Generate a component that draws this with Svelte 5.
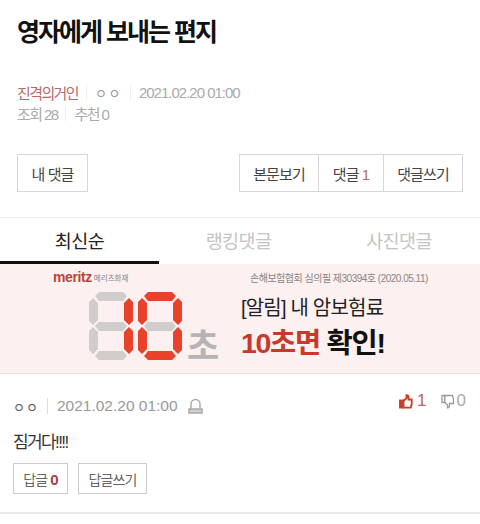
<script>
	const tabs = ['최신순', '랭킹댓글', '사진댓글'];

	// seven segment pieces, on a 44x68 box
	const segs = {
		top: '6,4 10,0 34,0 38,4 34,9 10,9',
		mid: '6,34 10,30 34,30 38,34 34,39 10,39',
		bottom: '6,64 10,59 34,59 38,64 34,68 10,68',
		leftUp: '0,10 4,6 9,11 9,28 4,33 0,29',
		leftDown: '0,39 4,35 9,40 9,57 4,62 0,58',
		rightUp: '44,10 40,6 35,11 35,28 40,33 44,29',
		rightDown: '44,39 40,35 35,40 35,57 40,62 44,58'
	};
	const digits = [
		['rightUp', 'rightDown'],
		['top', 'bottom', 'leftUp', 'leftDown', 'rightUp', 'rightDown']
	];
</script>

<div class="page">
	<h1 class="title">영자에게 보내는 편지</h1>

	<div class="meta">
		<div class="meta__row">
			<span class="meta__board">진격의거인</span>
			<span class="sep"></span>
			<span class="meta__nick">ㅇㅇ</span>
			<span class="sep"></span>
			<span class="meta__date">2021.02.20 01:00</span>
		</div>
		<div class="meta__row">
			<span>조회 28</span>
			<span class="sep"></span>
			<span>추천 0</span>
		</div>
	</div>

	<div class="actions">
		<button class="btn btn--mine">내 댓글</button>
		<div class="group">
			<button class="btn group__view">본문보기</button>
			<button class="btn group__count">댓글 <em>1</em></button>
			<button class="btn group__write">댓글쓰기</button>
		</div>
	</div>

	<div class="tabs">
		{#each tabs as tab, i}
			<div class="tab" class:tab--on={i === 0}>{tab}</div>
		{/each}
	</div>

	<div class="banner">
		<div class="banner__left">
			<div class="logo"><b>meritz</b> <span>메리츠화재</span></div>
			<div class="clock">
				{#each digits as lit}
					<svg width="44" height="68" viewBox="0 0 44 68">
						{#each Object.entries(segs) as [name, pts]}
							<polygon points={pts} fill={lit.includes(name) ? '#e8432a' : '#d2cdcd'} />
						{/each}
					</svg>
				{/each}
				<span class="clock__unit">초</span>
			</div>
		</div>
		<div class="banner__right">
			<div class="banner__review">손해보험협회 심의필 제30394호 (2020.05.11)</div>
			<div class="banner__head">[알림] 내 암보험료</div>
			<div class="banner__big"><em>10초면</em> 확인!</div>
		</div>
	</div>

	<div class="comment">
		<div class="comment__top">
			<div class="comment__info">
				<span class="comment__nick">ㅇㅇ</span>
				<span class="sep sep--tall"></span>
				<span class="comment__date">2021.02.20 01:00</span>
				<svg class="bell" width="15" height="16" viewBox="0 0 15 16" fill="none" stroke="#aaa" stroke-width="1.5">
					<path d="M3 11V6a4.500 4.500 0 0 1 9 0V11" />
					<rect x="1" y="11" width="13" height="4" fill="#d0d0d0" />
				</svg>
			</div>
			<div class="votes">
				<svg width="14" height="15" viewBox="0 0 14 15" fill="none" stroke="#c8402e" stroke-width="1.9">
					<rect x="1" y="6.500" width="3" height="7" fill="#c8402e" />
					<path d="M4.500 7 7.500 4V1.200c1.400 0 2 1 2 2.200V5.500h3.200V10l-1 3.600H4.500z" />
				</svg>
				<span class="votes__up">1</span>
				<svg class="votes__down" width="14" height="15" viewBox="0 0 14 15" fill="none" stroke="#9a9a9a" stroke-width="1.3">
					<rect x="1" y="1.500" width="2.600" height="7" />
					<path d="M3.600 8 6.500 11v2.800c1.400 0 2-1 2-2.200V9.500h4V5l-1-3.500H3.600z" />
				</svg>
				<span class="votes__no">0</span>
			</div>
		</div>
		<p class="comment__body">짐거다!!!!</p>
		<div class="comment__btns">
			<button class="btn btn--small reply">답글 <em>0</em></button>
			<button class="btn btn--small reply-write">답글쓰기</button>
		</div>
	</div>
</div>

<style>
	:global(body) {
		background: #fff;
	}
	.page {
		width: 480px;
		height: 524px;
		overflow: hidden;
		font-family: 'Liberation Sans', 'Noto Sans CJK KR', sans-serif;
	}
	.title {
		margin: 0;
		padding: 14px 17px 0;
		font-size: 25px;
		line-height: 36px;
		font-weight: 700;
		letter-spacing: -2px;
		color: #111;
	}
	.meta {
		margin: 32px 17px 0;
		font-size: 15px;
		letter-spacing: -1.6px;
		color: #aaa;
	}
	.meta__row {
		display: flex;
		align-items: center;
		height: 21px;
	}
	.meta__board {
		color: #b8686c;
	}
	.meta__nick {
		font-size: 13px;
		letter-spacing: 1.500px;
		color: #999;
	}
	.meta__date {
		letter-spacing: -1px;
	}
	.sep {
		width: 1px;
		height: 15px;
		margin: 0 8px;
		background: #eee;
	}
	.sep--tall {
		height: 16px;
		margin: 0 9px 0 8px;
		background: #ddd;
	}
	.actions {
		display: flex;
		justify-content: space-between;
		margin: 30px 17px 0;
	}
	.btn {
		height: 38px;
		padding: 0;
		border: 1px solid #d8d8d8;
		background: #fff;
		font-family: inherit;
		font-size: 15px;
		letter-spacing: -0.9px;
		color: #444;
	}
	.btn em {
		font-style: normal;
		color: #b8686c;
	}
	.btn--mine {
		width: 71px;
	}
	.group {
		display: flex;
	}
	.group__view {
		width: 79px;
		border-right: 0;
	}
	.group__count {
		width: 65px;
		border-right: 0;
	}
	.group__write {
		width: 80px;
	}
	.tabs {
		display: flex;
		margin-top: 25px;
		border-top: 1px solid #eee;
	}
	.tab {
		flex: 0 0 159px;
		height: 46px;
		padding-bottom: 3px;
		box-sizing: border-box;
		display: flex;
		align-items: center;
		justify-content: center;
		font-size: 18.5px;
		letter-spacing: -0.6px;
		color: #c4c4c4;
	}
	.tab:last-child {
		flex: 1;
	}
	.tab--on {
		color: #222;
		border-bottom: 3px solid #111;
		padding-bottom: 0;
	}
	.banner {
		display: flex;
		height: 110px;
		box-sizing: border-box;
		background: #fcf0f0;
		border-bottom: 1px solid #e6e2e2;
	}
	.banner__left {
		width: 241px;
		box-sizing: border-box;
		padding: 5px 0 0 53px;
	}
	.logo {
		display: flex;
		align-items: center;
		gap: 2px;
		height: 16px;
	}
	.logo b {
		font-size: 14px;
		letter-spacing: -0.4px;
		color: #b9453a;
	}
	.logo span {
		font-size: 7.5px;
		color: #8c8484;
	}
	.clock {
		display: flex;
		align-items: flex-end;
		gap: 5px;
		margin: 7px 0 0 36px;
	}
	.clock__unit {
		margin-bottom: -6px;
		font-size: 35px;
		line-height: 38px;
		font-weight: 700;
		color: #b5b3b3;
	}
	.banner__review {
		padding: 6px 0 0 9px;
		font-size: 10px;
		line-height: 17px;
		letter-spacing: -0.5px;
		color: #8b8585;
	}
	.banner__head {
		margin-top: 7px;
		font-size: 20px;
		line-height: 28px;
		letter-spacing: -0.8px;
		color: #222;
	}
	.banner__big {
		margin-top: 2px;
		font-size: 28.5px;
		line-height: 38px;
		font-weight: 700;
		letter-spacing: -1.3px;
		color: #111;
	}
	.banner__big em {
		font-style: normal;
		color: #c8392b;
	}
	.comment {
		padding: 0 13px;
		height: 140px;
		box-sizing: border-box;
		border-bottom: 2px solid #e8e8e8;
	}
	.comment__top {
		display: flex;
		justify-content: space-between;
		padding-top: 18px;
	}
	.comment__info {
		display: flex;
		align-items: center;
		height: 26px;
		margin-top: 1px;
	}
	.comment__nick {
		font-size: 13px;
		letter-spacing: 1px;
		color: #555;
	}
	.comment__date {
		font-size: 15.500px;
		color: #999;
	}
	.bell {
		margin-left: 10px;
	}
	.votes {
		display: flex;
		align-items: center;
		height: 16px;
		margin: 1px 1px 0 0;
		font-size: 17px;
	}
	.votes__up {
		margin-left: 4px;
		color: #c8605a;
	}
	.votes__down {
		margin-left: 14px;
	}
	.votes__no {
		margin-left: 2px;
		color: #aaa;
	}
	.comment__body {
		margin: 11px 0 0;
		font-size: 17px;
		line-height: 26px;
		letter-spacing: -1.600px;
		color: #333;
	}
	.comment__btns {
		display: flex;
		gap: 10px;
		margin-top: 7px;
	}
	.btn--small {
		height: 31px;
		font-size: 14px;
		color: #666;
		border-color: #ccc;
	}
	.reply {
		width: 55px;
	}
	.reply em {
		font-size: 15px;
		font-weight: 700;
		color: #a8423e;
	}
	.reply-write {
		width: 69px;
	}
</style>
